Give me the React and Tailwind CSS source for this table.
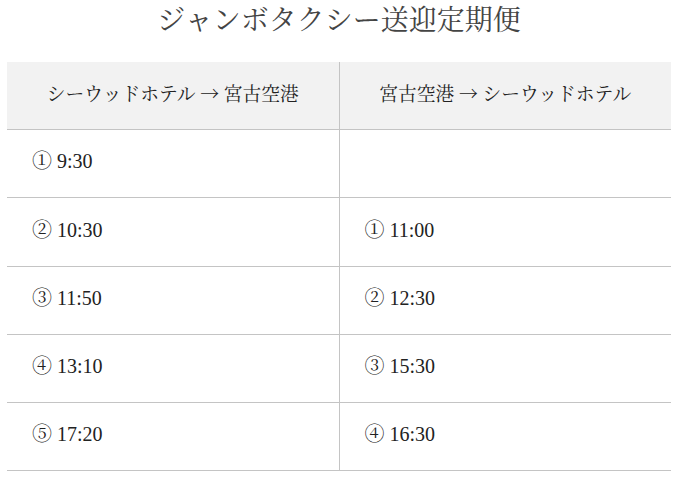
const rows = [
  ['① 9:30', ''],
  ['② 10:30', '① 11:00'],
  ['③ 11:50', '② 12:30'],
  ['④ 13:10', '③ 15:30'],
  ['⑤ 17:20', '④ 16:30'],
]

const Arrow = () => (
  <span style={{ fontFamily: '"Noto Serif CJK JP", "DejaVu Serif", serif' }}>→</span>
)

export default function App() {
  return (
    <div
      className="min-h-[480px] bg-white text-[#222]"
      style={{ fontFamily: '"Liberation Serif", "Noto Serif CJK JP", "Noto Sans CJK JP", serif' }}
    >
      <h1 className="pt-[3px] text-center text-[28px] leading-[36px] text-[#444]">
        ジャンボタクシー送迎定期便
      </h1>
      <table className="mx-[7px] mt-[23px] w-[664px] table-fixed border-collapse">
        <thead>
          <tr className="h-[67px] bg-[#f2f2f2] border-b border-[#c4c4c4]">
            <th className="w-1/2 border-r border-[#c4c4c4] pb-[3px] text-center text-[18.75px] font-normal">
              シーウッドホテル <Arrow /> 宮古空港
            </th>
            <th className="w-1/2 pb-[3px] text-center text-[18.75px] font-normal">
              宮古空港 <Arrow /> シーウッドホテル
            </th>
          </tr>
        </thead>
        <tbody>
          {rows.map((r, i) => (
            <tr key={i} className={`${i === 1 ? 'h-[69px]' : 'h-[68px]'} border-b border-[#c4c4c4]`}>
              <td className="border-r border-[#c4c4c4] pl-[25px] pb-[4px] text-[20px]">{r[0]}</td>
              <td className="pl-[25px] pb-[4px] text-[20px]">{r[1]}</td>
            </tr>
          ))}
        </tbody>
      </table>
    </div>
  )
}
